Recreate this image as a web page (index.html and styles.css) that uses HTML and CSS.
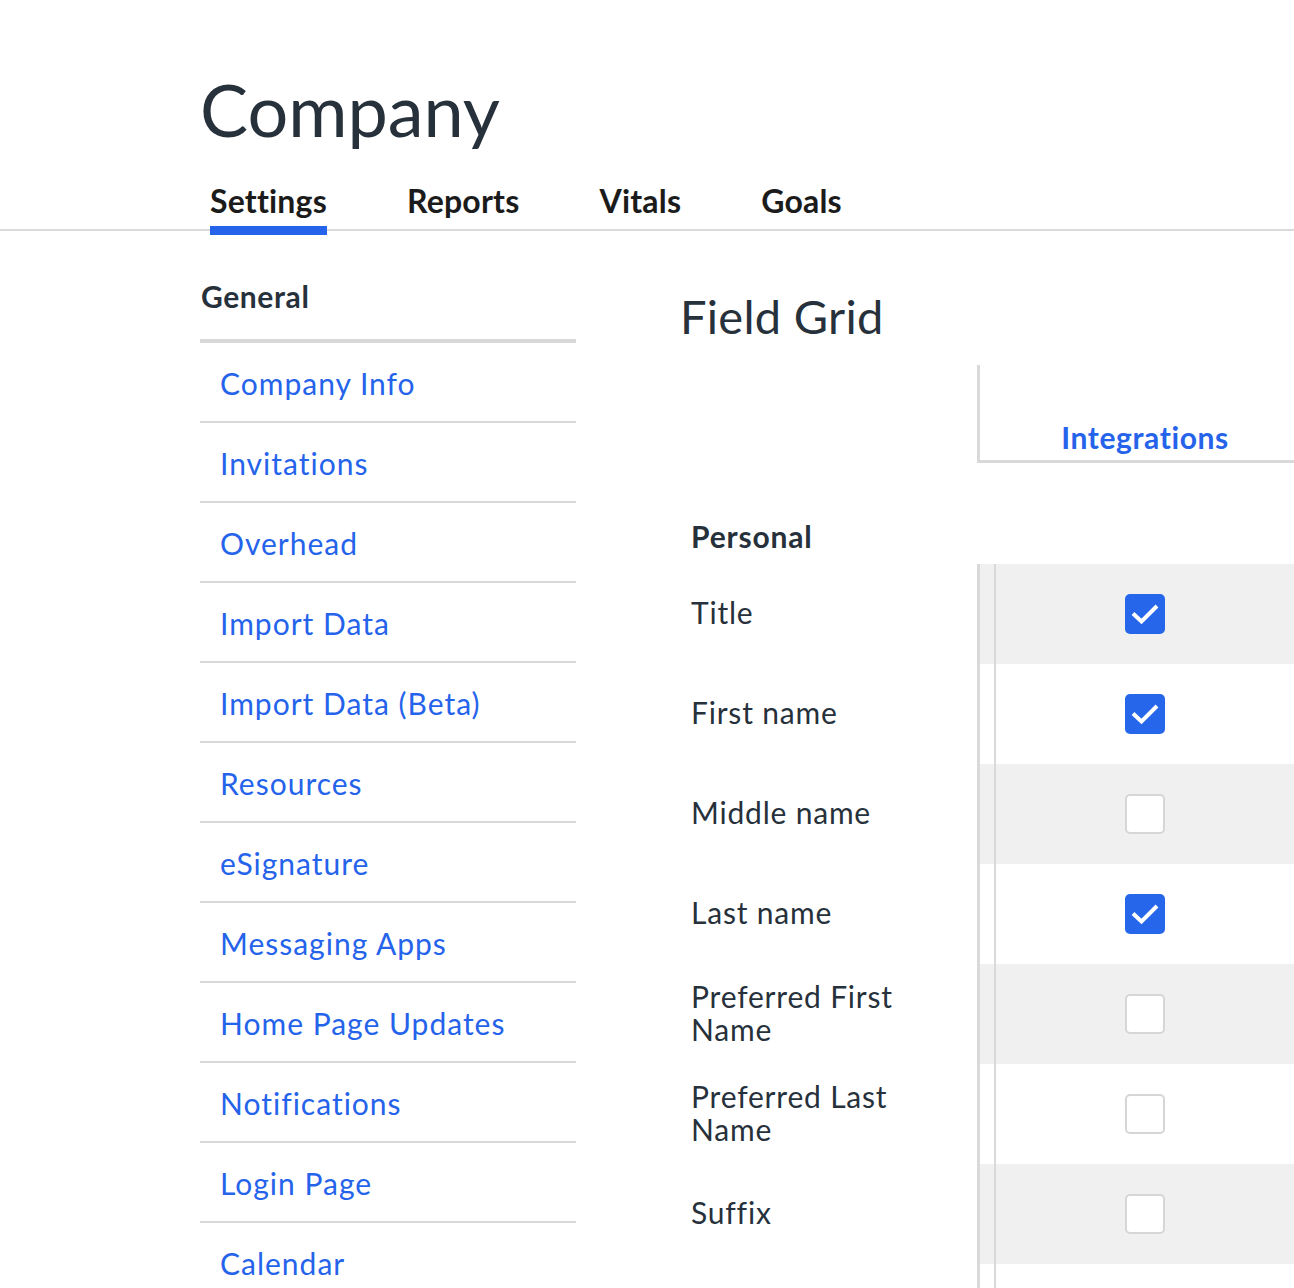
FILE: index.html
```html
<!DOCTYPE html>
<html lang="en">
    <head>
        <meta charset="UTF-8" />
        <meta name="viewport" content="width=device-width, initial-scale=1.0" />
        <title>Company Settings</title>
        <link rel="stylesheet" href="styles.css">
    </head>
    <body>
        <header class="page-header">
            <h1>Company</h1>
        </header>

        <nav class="tabs">
            <a class="tab active" href="#">Settings</a>
            <a class="tab" href="#">Reports</a>
            <a class="tab" href="#">Vitals</a>
            <a class="tab" href="#">Goals</a>
        </nav>

        <main class="layout">
            <aside class="sidebar">
                <h3 class="sidebar-title">General</h3>
                <ul class="sidebar-list">
                    <li><a href="#">Company Info</a></li>
                    <li><a href="#">Invitations</a></li>
                    <li><a href="#">Overhead</a></li>
                    <li><a href="#">Import Data</a></li>
                    <li><a href="#">Import Data (Beta)</a></li>
                    <li><a href="#">Resources</a></li>
                    <li><a href="#">eSignature</a></li>
                    <li><a href="#">Messaging Apps</a></li>
                    <li><a href="#">Home Page Updates</a></li>
                    <li><a href="#">Notifications</a></li>
                    <li><a href="#">Login Page</a></li>
                    <li><a href="#">Calendar</a></li>
                </ul>
            </aside>

            <section class="content">
                <h2>Field Grid</h2>

                <div class="field-grid">
                    <div class="head-label"></div>
                    <div class="head-col">Integrations</div>

                    <div class="group-label">Personal</div>
                    <div class="group-col"></div>

                    <div class="field-label">Title</div>
                    <div class="field-col shaded"><div class="col-inner"><span class="check on"></span></div></div>

                    <div class="field-label">First name</div>
                    <div class="field-col"><div class="col-inner"><span class="check on"></span></div></div>

                    <div class="field-label">Middle name</div>
                    <div class="field-col shaded"><div class="col-inner"><span class="check"></span></div></div>

                    <div class="field-label">Last name</div>
                    <div class="field-col"><div class="col-inner"><span class="check on"></span></div></div>

                    <div class="field-label">Preferred First Name</div>
                    <div class="field-col shaded"><div class="col-inner"><span class="check"></span></div></div>

                    <div class="field-label">Preferred Last Name</div>
                    <div class="field-col"><div class="col-inner"><span class="check"></span></div></div>

                    <div class="field-label">Suffix</div>
                    <div class="field-col shaded"><div class="col-inner"><span class="check"></span></div></div>

                    <div class="field-label"></div>
                    <div class="field-col"><div class="col-inner"></div></div>
                </div>
            </section>
        </main>
    </body>
</html>
```

FILE: styles.css
```css
html {
    font-family: Lato, "Liberation Sans", sans-serif;
    color: #27313b;
}

body {
    margin: 0;
    overflow: hidden;
}

a {
    text-decoration: none;
}

.page-header {
    padding: 73px 0 0 200px;
}

h1 {
    margin: 0;
    font-size: 72px;
    font-weight: 400;
    line-height: 1;
}

.tabs {
    display: flex;
    gap: 80px;
    margin-top: 37px;
    padding-left: 210px;
    border-bottom: 2px solid #dadada;
}

.tab {
    position: relative;
    padding-bottom: 10px;
    font-size: 32px;
    font-weight: 700;
    line-height: 37px;
    letter-spacing: 0.2px;
    color: #1b1b1b;
}

.tab.active::after {
    content: "";
    position: absolute;
    left: 0;
    right: 0;
    bottom: -6px;
    height: 9px;
    background: #2563eb;
}

.layout {
    display: flex;
    gap: 104px;
    padding-left: 200px;
}

.sidebar {
    width: 376px;
    flex-shrink: 0;
}

.sidebar-title {
    margin: 0;
    padding: 47px 0 0 1px;
    height: 61px;
    font-size: 30px;
    font-weight: 700;
    line-height: 36px;
    letter-spacing: 0.6px;
    border-bottom: 4px solid #d9d9d9;
}

.sidebar-list {
    list-style: none;
    margin: 0;
    padding: 0;
}

.sidebar-list li {
    display: flex;
    align-items: center;
    padding: 2px 0 0 20px;
    box-sizing: border-box;
    height: 80px;
    border-bottom: 2px solid #d9d9d9;
}

.sidebar-list a {
    font-size: 30px;
    letter-spacing: 1px;
    color: #2563eb;
}

.content {
    flex: 1;
}

h2 {
    margin: 0;
    padding-top: 57px;
    font-size: 47px;
    font-weight: 400;
    line-height: 56px;
    letter-spacing: 0.3px;
}

.field-grid {
    display: grid;
    grid-template-columns: 297px 1fr;
    margin-top: 21px;
}

.head-col {
    display: flex;
    align-items: flex-end;
    justify-content: center;
    padding: 0 0 5px 16px;
    box-sizing: border-box;
    height: 98px;
    border-left: 3px solid #d9d9d9;
    border-bottom: 3px solid #d9d9d9;
    font-size: 30px;
    font-weight: 700;
    letter-spacing: 0.6px;
    color: #2563eb;
}

.group-label {
    height: 101px;
    display: flex;
    align-items: flex-end;
    padding: 0 0 10px 11px;
    box-sizing: border-box;
    font-size: 30px;
    font-weight: 700;
    letter-spacing: 0.8px;
}

.field-label {
    height: 100px;
    display: flex;
    align-items: center;
    padding: 0 50px 3px 11px;
    box-sizing: border-box;
    font-size: 30px;
    line-height: 33px;
    letter-spacing: 0.8px;
}

.field-col {
    height: 100px;
    border-left: 3px solid #d9d9d9;
}

.field-col.shaded {
    background: #f0f0f0;
}

.col-inner {
    height: 100%;
    margin-left: 14px;
    border-left: 2px solid #d9d9d9;
    display: flex;
    align-items: center;
    justify-content: center;
}

.check {
    width: 40px;
    height: 40px;
    box-sizing: border-box;
    border: 2px solid #d6d6d6;
    border-radius: 5px;
    background: #fff;
}

.check.on {
    border: none;
    background: #2666ea url("data:image/svg+xml,%3Csvg xmlns='http://www.w3.org/2000/svg' viewBox='0 0 40 40'%3E%3Cpath d='M8 19.5l8.5 8L32 12' fill='none' stroke='%23fff' stroke-width='4'/%3E%3C/svg%3E") center / 40px 40px no-repeat;
}
```
